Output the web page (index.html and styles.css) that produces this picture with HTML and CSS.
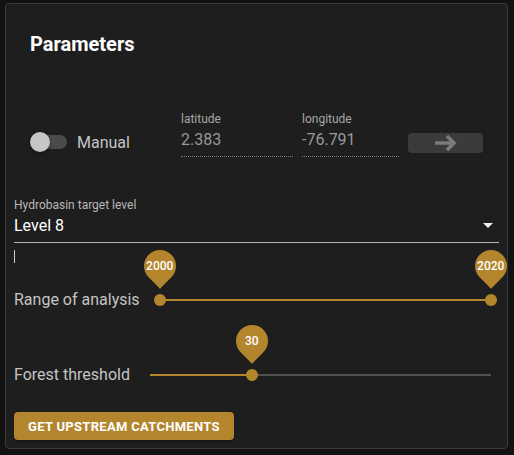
FILE: index.html
```html
<!DOCTYPE html>
<html lang="en">
<head>
<meta charset="utf-8">
<title>Parameters</title>
<link rel="stylesheet" href="styles.css">
</head>
<body>
<div class="card">
  <h2 class="title">Parameters</h2>

  <div class="coords">
    <div class="switch"><span class="track"></span><span class="knob"></span></div>
    <span class="manual">Manual</span>
    <div class="field lat">
      <div class="field-label">latitude</div>
      <div class="field-value">2.383</div>
    </div>
    <div class="field lon">
      <div class="field-label">longitude</div>
      <div class="field-value">-76.791</div>
    </div>
    <button class="go" type="button" aria-label="go">
      <svg width="24" height="18" viewBox="0 0 24 18"><path d="M1 9H20M13 2L20 9L13 16" fill="none" stroke="#7b7b7b" stroke-width="3.6"/></svg>
    </button>
  </div>

  <div class="select">
    <div class="select-label">Hydrobasin target level</div>
    <div class="select-value">
      <span>Level 8</span>
      <svg class="dd" width="10" height="5" viewBox="0 0 10 5"><path d="M0 0L5 5L10 0Z" fill="#f2f2f2"/></svg>
    </div>
  </div>

  <div class="caret"></div>

  <div class="slider-row range">
    <span class="slider-label">Range of analysis</span>
    <div class="slider">
      <div class="rail"></div>
      <div class="fill" style="left:0%;width:100%"></div>
      <div class="thumb" style="left:0%"><span class="bubble"><span class="bubble-text">2000</span></span></div>
      <div class="thumb" style="left:100%"><span class="bubble"><span class="bubble-text">2020</span></span></div>
    </div>
  </div>

  <div class="slider-row forest">
    <span class="slider-label">Forest threshold</span>
    <div class="slider">
      <div class="rail"></div>
      <div class="fill" style="left:0%;width:30%"></div>
      <div class="thumb" style="left:30%"><span class="bubble"><span class="bubble-text">30</span></span></div>
    </div>
  </div>

  <button class="action" type="button">Get upstream catchments</button>
</div>
</body>
</html>
```

FILE: styles.css
```css
html, body {
  margin: 0;
  padding: 0;
  background: #121212;
}

body {
  font-family: Roboto, "Liberation Sans", sans-serif;
  color: #ffffff;
}

.card {
  box-sizing: border-box;
  margin: 3px 0 0 5px;
  width: 503px;
  height: 446px;
  background: #1e1e1e;
  border: 1px solid #3a3a3a;
  border-radius: 4px;
  padding: 0 8px;
  overflow: hidden;
}

.title {
  margin: 28px 0 0 16px;
  font-size: 20px;
  line-height: 24px;
  font-weight: 700;
  color: #ffffff;
}

/* top row */
.coords {
  display: flex;
  align-items: center;
  height: 60px;
  margin-top: 56px;
}

.switch {
  position: relative;
  width: 38px;
  height: 20px;
  margin-left: 16px;
  flex: none;
}

.track {
  position: absolute;
  left: 3px;
  top: 3px;
  width: 34px;
  height: 14px;
  border-radius: 7px;
  background: #4b4b4b;
}

.knob {
  position: absolute;
  left: 0;
  top: 0;
  width: 20px;
  height: 20px;
  border-radius: 50%;
  background: #c6c6c6;
  box-shadow: 0 1px 3px rgba(0, 0, 0, 0.5);
}

.manual {
  width: 104px;
  margin-left: 9px;
  font-size: 16px;
  line-height: 19px;
  color: #c4c4c4;
  flex: none;
}

.field {
  align-self: flex-start;
  flex: none;
}

.lat { width: 112px; }
.lon { width: 97px; margin-left: 9px; }

.field-label {
  font-size: 12px;
  line-height: 14px;
  color: #a6a6a6;
}

.field-value {
  margin-top: 4px;
  font-size: 16px;
  line-height: 19px;
  padding-bottom: 7px;
  color: #999999;
  border-bottom: 1px dotted #7e7e7e;
}

.go {
  margin: 2px 0 0 9px;
  width: 75px;
  height: 20px;
  padding: 0;
  border: none;
  border-radius: 4px;
  background: #3b3b3b;
  display: flex;
  align-items: center;
  justify-content: center;
  flex: none;
}

.go svg { display: block; }

/* select */
.select { margin-top: 26px; }

.select-label {
  font-size: 12px;
  line-height: 14px;
  color: #b8b8b8;
}

.select-value {
  margin-top: 4px;
  display: flex;
  align-items: center;
  justify-content: space-between;
  font-size: 16px;
  line-height: 19px;
  padding-bottom: 7px;
  border-bottom: 1px solid #b5b5b5;
  color: #ffffff;
}

.dd {
  display: block;
  margin-right: 6px;
}

.caret {
  margin-top: 7px;
  width: 1px;
  height: 13px;
  background: #cfcfcf;
}

/* sliders */
.slider-row {
  display: flex;
  align-items: center;
  height: 24px;
}

.range { margin-top: 24px; }
.forest { margin-top: 51px; }

.slider-label {
  flex: none;
  font-size: 16px;
  line-height: 19px;
  color: #c4c4c4;
}

.range .slider-label { width: 146px; }
.forest .slider-label { width: 136px; }

.slider {
  position: relative;
  flex: 1;
  height: 24px;
  margin-right: 8px;
}

.rail {
  position: absolute;
  left: 0;
  right: 0;
  top: 12px;
  height: 2px;
  background: #525252;
}

.fill {
  position: absolute;
  top: 12px;
  height: 2px;
  background: #b3862e;
}

.thumb {
  position: absolute;
  top: 7px;
  width: 12px;
  height: 12px;
  margin-left: -6px;
  border-radius: 50%;
  background: #b3862e;
}

.bubble {
  position: absolute;
  left: -10px;
  top: -44px;
  width: 32px;
  height: 32px;
  border-radius: 50% 50% 50% 0;
  background: #b3862e;
  transform: rotate(-45deg);
  display: flex;
  align-items: center;
  justify-content: center;
}

.bubble-text {
  transform: rotate(45deg);
  font-size: 12px;
  line-height: 14px;
  font-weight: 500;
  color: #ffffff;
}

/* action button */
.action {
  display: block;
  width: fit-content;
  margin-top: 26px;
  height: 28px;
  padding: 0 14px;
  border: none;
  border-radius: 4px;
  background: #b3862e;
  color: #ffffff;
  font-family: Roboto, "Liberation Sans", sans-serif;
  font-size: 13px;
  font-weight: 700;
  letter-spacing: 0.3px;
  text-transform: uppercase;
  box-shadow: 0 2px 2px rgba(0, 0, 0, 0.3);
}
```
